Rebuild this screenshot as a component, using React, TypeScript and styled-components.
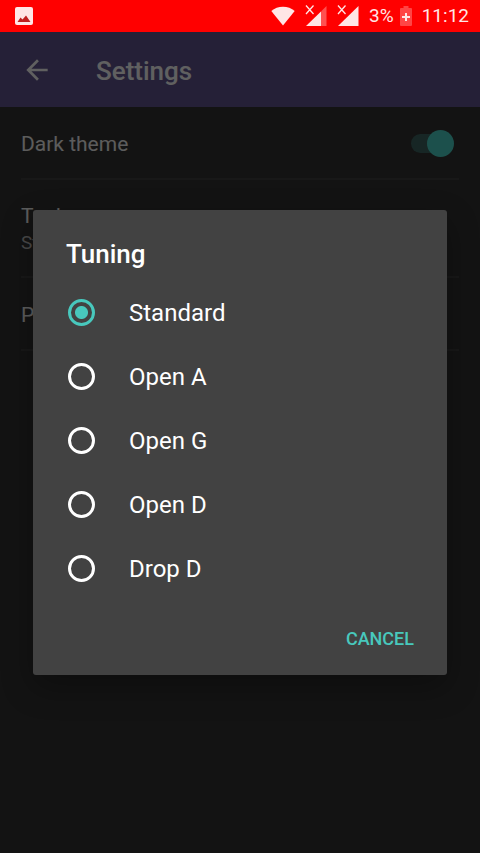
import React, { useState } from "react";
import styled, { createGlobalStyle } from "styled-components";

const GlobalStyle = createGlobalStyle`
  *, *::before, *::after { box-sizing: border-box; }
  body {
    margin: 0;
    background: #303030;
    font-family: Roboto, "Liberation Sans", sans-serif;
  }
  button, input { font-family: inherit; margin: 0; }
`;

const ACCENT = "#48c8bd";

const Screen = styled.div`
  position: relative;
  display: flex;
  flex-direction: column;
  min-height: 100vh;
  background: #303030;
  color: #fff;
`;

const StatusBar = styled.div`
  display: flex;
  align-items: center;
  justify-content: space-between;
  height: 32px;
  padding: 0 11px 0 15px;
  background: #ff0000;
  color: #ffe6e6;
  font-size: 19px;
  line-height: 32px;
`;

const StatusGroup = styled.div`
  display: flex;
  align-items: center;
  gap: 10px;
`;

const Battery = styled.span`
  display: flex;
  align-items: center;
  gap: 6px;
`;

const Icon = styled.svg`
  display: block;
  flex: none;
`;

const AppBar = styled.header`
  display: flex;
  align-items: center;
  gap: 43px;
  height: 75px;
  padding: 0 21px;
  background: #5d508a;
`;

const BackButton = styled.button`
  display: flex;
  padding: 0;
  border: 0;
  background: none;
  color: #f0f0f0;
`;

const PageTitle = styled.h1`
  margin: 0;
  padding-top: 2px;
  font-size: 26px;
  line-height: 36px;
  font-weight: 500;
  color: #f0f0f0;
`;

const Preferences = styled.main`
  display: flex;
  flex-direction: column;
  padding: 0 21px;
`;

const Preference = styled.div`
  display: flex;
  align-items: center;
  justify-content: space-between;
  min-height: 73px;
  padding: 22px 5px 20px 0;
  border-bottom: 2px solid #3e3e3e;
`;

const PreferenceLabel = styled.label`
  font-size: 21px;
  line-height: 28px;
  color: #e6e6e6;
`;

const PreferenceButton = styled.button`
  display: flex;
  flex-direction: column;
  align-items: flex-start;
  padding: 0;
  border: 0;
  background: none;
  font-size: 21px;
  line-height: 28px;
  color: #e6e6e6;
`;

const Summary = styled.span`
  font-size: 19px;
  line-height: 26px;
  color: #b4b4b4;
`;

const Switch = styled.input`
  appearance: none;
  position: relative;
  width: 43px;
  height: 19px;
  border-radius: 10px;
  background: linear-gradient(to right, #3a605d 34px, transparent 34px);

  &::after {
    content: "";
    position: absolute;
    right: 0;
    top: -4px;
    width: 27px;
    height: 27px;
    border-radius: 50%;
    background: ${ACCENT};
  }
`;

const Scrim = styled.div`
  position: absolute;
  inset: 32px 0 0;
  display: flex;
  align-items: center;
  justify-content: center;
  padding: 0 33px;
  background: rgba(0, 0, 0, 0.6);
`;

const Dialog = styled.form`
  display: flex;
  flex-direction: column;
  width: 100%;
  max-width: 560px;
  border-radius: 3px;
  background: #424242;
  box-shadow: 0 12px 32px rgba(0, 0, 0, 0.3);
`;

const DialogTitle = styled.h2`
  margin: 0;
  padding: 26px 33px 8px;
  font-size: 26px;
  line-height: 36px;
  font-weight: 500;
`;

const Options = styled.div`
  display: flex;
  flex-direction: column;
`;

const Option = styled.label`
  display: flex;
  align-items: center;
  gap: 34px;
  height: 64px;
  padding: 0 35px;
`;

const OptionName = styled.span`
  padding-top: 2px;
  font-size: 24px;
  line-height: 32px;
`;

const Radio = styled.input`
  appearance: none;
  flex: none;
  width: 27px;
  height: 27px;
  border: 3px solid #fff;
  border-radius: 50%;

  &:checked {
    border-color: ${ACCENT};
    background: radial-gradient(circle, ${ACCENT} 6px, transparent 7px);
  }
`;

const Actions = styled.div`
  display: flex;
  justify-content: flex-end;
  padding: 14px 25px 13px;
`;

const TextButton = styled.button`
  height: 48px;
  padding: 0 8px;
  border: 0;
  background: none;
  color: ${ACCENT};
  font-size: 18px;
  font-weight: 500;
`;

const TUNINGS = ["Standard", "Open A", "Open G", "Open D", "Drop D"];

function PhotoIcon() {
  return (
    <Icon width="18" height="18" viewBox="0 0 18 18" aria-hidden="true">
      <rect width="18" height="18" rx="2" fill="currentColor" />
      <path d="M2.500 15 5.500 10.500 7.500 12.500 11 8.500 15.500 15z" fill="#c02020" />
    </Icon>
  );
}

function WifiIcon() {
  return (
    <Icon width="24" height="20" viewBox="0 0 24 20" fill="currentColor" aria-hidden="true">
      <path d="M12 19.500 0.300 5C3.500 2.300 7.500 0.800 12 0.800S20.500 2.300 23.700 5z" />
    </Icon>
  );
}

function SignalIcon({ partial = false }: { partial?: boolean }) {
  return (
    <Icon width="22" height="22" viewBox="0 0 22 22" fill="currentColor" aria-hidden="true">
      {partial ? (
        <>
          <path d="M16 6.500 21.500 1v20H16z" opacity=".35" />
          <path d="M1 21 16 6.500V21z" />
        </>
      ) : (
        <path d="M1 21 21.500 1v20z" />
      )}
      <path d="M1 .5 8.500 9M8.500 .5 1 9" fill="none" stroke="currentColor" strokeWidth="1.300" />
    </Icon>
  );
}

function BatteryIcon() {
  return (
    <Icon width="12" height="20" viewBox="0 0 12 20" fill="currentColor" aria-hidden="true">
      <path d="M3.500 0h5v2H11a1 1 0 0 1 1 1v16a1 1 0 0 1-1 1H1a1 1 0 0 1-1-1V3a1 1 0 0 1 1-1h2.500z" opacity=".3" />
      <path d="M5 7h2v3h3v2H7v3H5v-3H2v-2h3z" />
    </Icon>
  );
}

function BackIcon() {
  return (
    <Icon width="32" height="32" viewBox="0 0 24 24" fill="currentColor" aria-hidden="true">
      <path d="M20 11H7.830l5.590-5.590L12 4l-8 8 8 8 1.410-1.410L7.830 13H20v-2z" />
    </Icon>
  );
}

export default function App() {
  const [tuning, setTuning] = useState("Standard");
  const [dark, setDark] = useState(true);

  return (
    <Screen>
      <GlobalStyle />
      <StatusBar>
        <PhotoIcon />
        <StatusGroup>
          <WifiIcon />
          <SignalIcon partial />
          <SignalIcon />
          <Battery>
            3%
            <BatteryIcon />
          </Battery>
          <span>11:12</span>
        </StatusGroup>
      </StatusBar>

      <AppBar>
        <BackButton aria-label="Back">
          <BackIcon />
        </BackButton>
        <PageTitle>Settings</PageTitle>
      </AppBar>

      <Preferences>
        <Preference>
          <PreferenceLabel htmlFor="dark-theme">Dark theme</PreferenceLabel>
          <Switch
            id="dark-theme"
            type="checkbox"
            role="switch"
            checked={dark}
            onChange={(e) => setDark(e.target.checked)}
          />
        </Preference>
        <Preference>
          <PreferenceButton>
            Tuning
            <Summary>{tuning}</Summary>
          </PreferenceButton>
        </Preference>
        <Preference>
          <PreferenceButton>Privacy policy</PreferenceButton>
        </Preference>
      </Preferences>

      <Scrim>
        <Dialog role="dialog" aria-labelledby="tuning-title">
          <DialogTitle id="tuning-title">Tuning</DialogTitle>
          <Options role="radiogroup" aria-labelledby="tuning-title">
            {TUNINGS.map((name) => (
              <Option key={name}>
                <Radio
                  type="radio"
                  name="tuning"
                  value={name}
                  checked={tuning === name}
                  onChange={() => setTuning(name)}
                />
                <OptionName>{name}</OptionName>
              </Option>
            ))}
          </Options>
          <Actions>
            <TextButton type="button">CANCEL</TextButton>
          </Actions>
        </Dialog>
      </Scrim>
    </Screen>
  );
}
